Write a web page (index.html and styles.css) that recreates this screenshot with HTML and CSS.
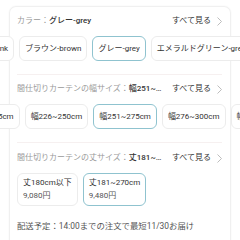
FILE: index.html
```html
<!DOCTYPE html>
<html lang="ja">
<head>
<meta charset="utf-8">
<link rel="stylesheet" href="styles.css">
</head>
<body>
<div class="card">
  <section class="sec sec-color">
    <div class="head">
      <div class="label"><span class="key">カラー：</span><span class="val">グレー-grey</span></div>
      <div class="more">すべて見る<svg class="chev" width="5" height="9" viewBox="0 0 5 9"><polyline points="0.5,0.5 4.5,4.5 0.5,8.5" fill="none" stroke="#b5b5b5" stroke-width="0.9"/></svg></div>
    </div>
    <div class="scroller">
      <div class="track track-color">
        <div class="chip">ピンク-pink</div>
        <div class="chip">ブラウン-brown</div>
        <div class="chip sel">グレー-grey</div>
        <div class="chip">エメラルドグリーン-green</div>
      </div>
    </div>
  </section>
  <section class="sec sec-width">
    <div class="head">
      <div class="label"><span class="key">間仕切りカーテンの幅サイズ：</span><span class="val">幅251~…</span></div>
      <div class="more">すべて見る<svg class="chev" width="5" height="9" viewBox="0 0 5 9"><polyline points="0.5,0.5 4.5,4.5 0.5,8.5" fill="none" stroke="#b5b5b5" stroke-width="0.9"/></svg></div>
    </div>
    <div class="scroller">
      <div class="track track-width">
        <div class="chip">幅201~225cm</div>
        <div class="chip">幅226~250cm</div>
        <div class="chip sel">幅251~275cm</div>
        <div class="chip">幅276~300cm</div>
        <div class="chip">幅301~325cm</div>
      </div>
    </div>
  </section>
  <section class="sec sec-len">
    <div class="head">
      <div class="label"><span class="key">間仕切りカーテンの丈サイズ：</span><span class="val">丈181~…</span></div>
      <div class="more">すべて見る<svg class="chev" width="5" height="9" viewBox="0 0 5 9"><polyline points="0.5,0.5 4.5,4.5 0.5,8.5" fill="none" stroke="#b5b5b5" stroke-width="0.9"/></svg></div>
    </div>
    <div class="chips2">
      <div class="chip chip2"><span>丈180cm以下</span><span>9,080円</span></div>
      <div class="chip chip2 sel"><span>丈181~270cm</span><span>9,480円</span></div>
    </div>
    <div class="ship">配送予定：14:00までの注文で最短11/30お届け</div>
  </section>
</div>
</body>
</html>
```

FILE: styles.css
```css
* { box-sizing: border-box; }
html, body { margin: 0; padding: 0; background: #fff; }
body {
  width: 240px;
  height: 240px;
  overflow: hidden;
  font-family: Roboto, "Noto Sans CJK JP", sans-serif;
  font-size: 8px;
  color: #333;
}
.card {
  margin: 6px 9px 0;
  border: 1px solid #f0f0f0;
  border-bottom: none;
  border-radius: 7px 7px 0 0;
  box-shadow: 0 0 2px rgba(0,0,0,0.05);
  padding: 0 8px 0 7px;
  height: 240px;
}
.sec { border-bottom: 1px solid #f6f0f0; padding: 8px 0 13px; }
.sec-color { padding-top: 8px; }
.sec-len { border-bottom: none; padding-top: 9px; }
.head {
  display: flex;
  justify-content: space-between;
  align-items: center;
  height: 12px;
  line-height: 12px;
  white-space: nowrap;
}
.label { white-space: nowrap; min-width: 0; }
.key { color: #9a9a9a; }
.val { color: #333; font-weight: 500; }
.more { display: flex; align-items: center; gap: 6px; color: #333; flex-shrink: 0; white-space: nowrap; }
.chev { display: block; }
.scroller {
  margin: 9px -18px 0 -17px;
  overflow: hidden;
}
.track { display: flex; gap: 5px; }
.track-color { margin-left: -39px; }
.track-width { margin-left: -44px; }
.chip {
  flex-shrink: 0;
  height: 25px;
  line-height: 23px;
  padding: 0 5px;
  border: 1px solid #ececec;
  border-radius: 6px;
  background: #fff;
  white-space: nowrap;
  color: #333;
}
.chip.sel { border-color: #8fc3cf; }
.chips2 { display: flex; gap: 5px; margin-top: 9px; }
.chip2 {
  height: 33px;
  line-height: 12.5px;
  padding: 4px 5px;
  display: flex;
  flex-direction: column;
  justify-content: center;
  min-width: 59px;
}
.chip2 span + span { color: #555; }
.ship { margin-top: 14px; color: #555; line-height: 12px; font-size: 8.4px; }
```
